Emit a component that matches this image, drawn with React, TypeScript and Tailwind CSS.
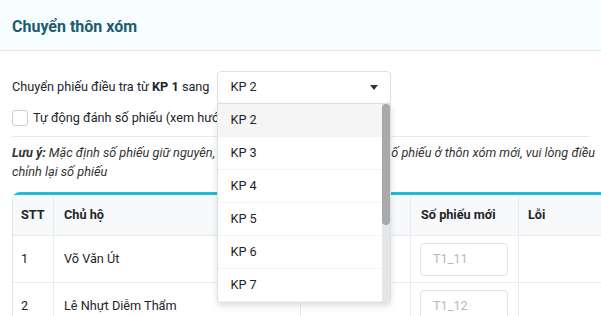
import React from "react";

const items = ["KP 2", "KP 3", "KP 4", "KP 5", "KP 6", "KP 7"];

export default function App() {
  return (
    <div
      className="w-[601px] h-[316px] overflow-hidden bg-white text-[12.7px] text-[#212529]"
      style={{ fontFamily: "Roboto, 'Liberation Sans', sans-serif" }}
    >
      <div className="h-[51px] bg-[#f5fdff] border-b border-[#e3e8ea] px-3 pt-[3px] flex items-center">
        <h1 className="text-[16px] font-bold text-[#1d5b70] leading-none">Chuyển thôn xóm</h1>
      </div>
      <div className="pl-3 pr-[4px]">
        <div className="mt-[20px] flex items-center h-[32px]">
          <span>
            Chuyển phiếu điều tra từ <b>KP 1</b> sang
          </span>
          <div className="relative ml-[8px] w-[174px]">
            <div className="h-[33px] border border-[#d3e3e9] rounded-[4px] flex items-center pl-[12px] pr-[12px] justify-between bg-white">
              <span>KP 2</span>
              <svg width="8" height="5" viewBox="0 0 8 5">
                <path d="M0 0 L8 0 L4 5 Z" fill="#333" />
              </svg>
            </div>
            <div className="absolute left-0 top-[32px] w-[174px] h-[200px] bg-white border border-[#d3e3e9] rounded-b-[4px] shadow-[0_3px_6px_rgba(0,0,0,0.12)] z-10 flex overflow-hidden">
              <div className="flex-1">
                {items.map((it, i) => (
                  <div
                    key={it}
                    className={
                      "h-[33px] flex items-center pl-[12px] border-b border-[#f4f4f4] " +
                      (i === 0 ? "bg-[#f5f5f5]" : "bg-white")
                    }
                  >
                    {it}
                  </div>
                ))}
              </div>
              <div className="w-[8px] bg-[#e6e6e6] relative">
                <div className="absolute left-0 top-0 w-[8px] h-[121px] bg-[#a9a9a9] rounded-[4px]" />
              </div>
            </div>
          </div>
        </div>
        <div className="mt-[7px] flex items-center h-[16px]">
          <div className="w-[16px] h-[16px] border border-[#c9cfd4] rounded-[3px] bg-white" />
          <span className="ml-[5px]">Tự động đánh số phiếu (xem hướng dẫn)</span>
        </div>
        <div className="mt-[10px] border-t border-[#e6e9eb] mr-[8px]" />
        <p className="mt-[6px] italic leading-[19px] text-[#333]">
          <b>Lưu ý:</b> Mặc định số phiếu giữ nguyên, nếu số phiếu bị trùng khớp với số phiếu ở thôn xóm mới, vui lòng điều chỉnh lại số phiếu
        </p>
        <div className="mt-[11px] w-[640px] border-t-[3px] border-l border-t-[#22bad6] border-l-[#e3e7ea] rounded-tl-[8px]">
          <div className="grid grid-cols-[41px_247px_110px_108px_1fr] bg-[#f8f9fa] h-[41px] border-b border-[#e9ecef] font-bold">
            <div className="px-[8px] flex items-center border-r border-[#e9ecef]">STT</div>
            <div className="px-[10px] flex items-center border-r border-[#e9ecef]">Chủ hộ</div>
            <div className="px-[10px] flex items-center border-r border-[#e9ecef]">Số phiếu</div>
            <div className="px-[10px] flex items-center border-r border-[#e9ecef]">Số phiếu mới</div>
            <div className="px-[9px] flex items-center">Lỗi</div>
          </div>
          {[
            ["1", "Võ Văn Út", "T1_11"],
            ["2", "Lê Nhựt Diễm Thẩm", "T1_12"],
          ].map(([n, name, ph]) => (
            <div key={n} className="grid grid-cols-[41px_247px_110px_108px_1fr] h-[47px] border-b border-[#e9ecef]">
              <div className="px-[8px] flex items-center border-r border-[#e9ecef]">{n}</div>
              <div className="px-[10px] flex items-center border-r border-[#e9ecef]">{name}</div>
              <div className="px-[10px] flex items-center border-r border-[#e9ecef]" />
              <div className="px-[9px] flex items-center border-r border-[#e9ecef]">
                <div className="w-[88px] h-[33px] border border-[#e2e5e8] rounded-[4px] flex items-center px-[12px] text-[#b5b9bd]">
                  {ph}
                </div>
              </div>
              <div />
            </div>
          ))}
        </div>
      </div>
    </div>
  );
}
